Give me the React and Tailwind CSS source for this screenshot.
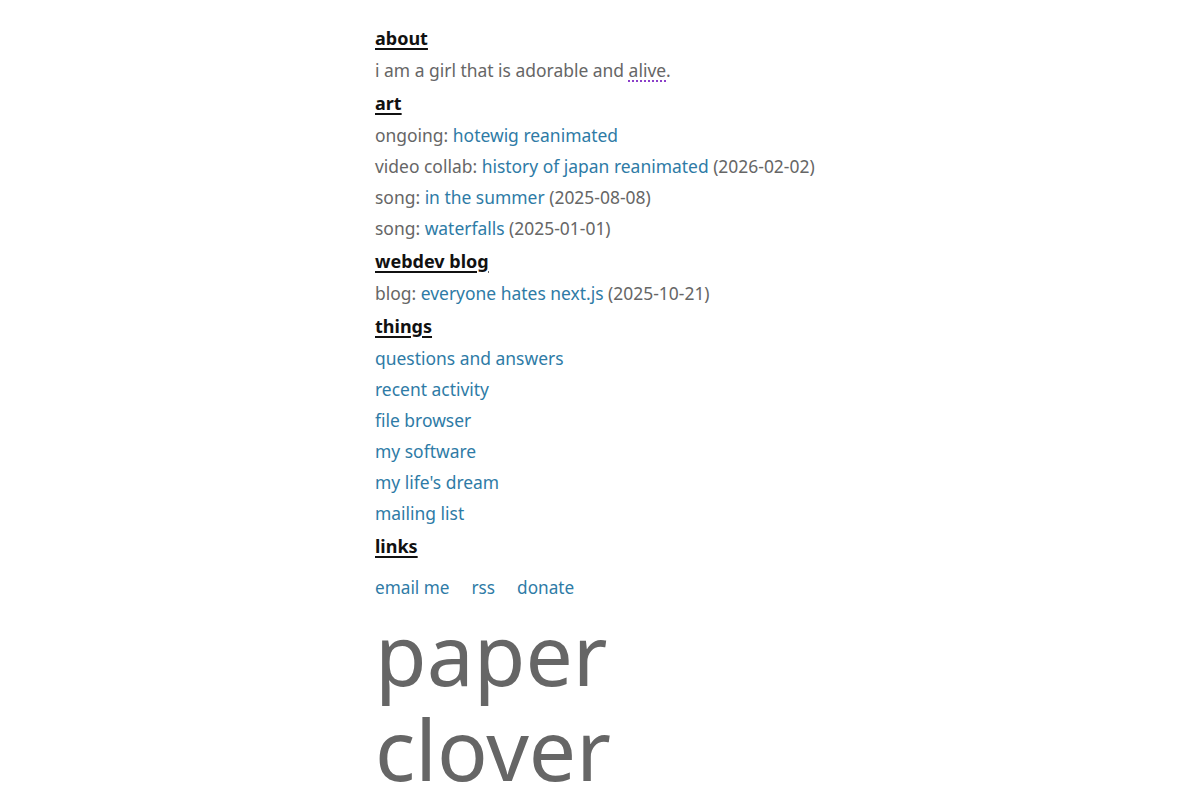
import React from "react";

const Link = ({ children }) => (
  <a href="#" className="text-[#2e7ba6] no-underline">{children}</a>
);

const H = ({ children }) => (
  <h2 className="text-[18px] font-bold text-[#111] underline underline-offset-[3px] decoration-[1.5px] leading-[34px]">{children}</h2>
);

const Row = ({ children }) => <div className="leading-[31px]">{children}</div>;

export default function App() {
  return (
    <div className="min-h-[800px] bg-white" style={{ fontFamily: '"Noto Sans", sans-serif' }}>
      <div className="mx-auto w-[450px] pt-[21px] text-[17.45px] text-[#666]">
        <H>about</H>
        <Row>
          i am a girl that is adorable and{" "}
          <span className="underline decoration-dotted decoration-[#8b3fc9] decoration-2 underline-offset-[3px]">alive</span>.
        </Row>
        <H>art</H>
        <Row>ongoing: <Link>hotewig reanimated</Link></Row>
        <Row>video collab: <Link>history of japan reanimated</Link> (2026-02-02)</Row>
        <Row>song: <Link>in the summer</Link> (2025-08-08)</Row>
        <Row>song: <Link>waterfalls</Link> (2025-01-01)</Row>
        <H>webdev blog</H>
        <Row>blog: <Link>everyone hates next.js</Link> (2025-10-21)</Row>
        <H>things</H>
        <Row><Link>questions and answers</Link></Row>
        <Row><Link>recent activity</Link></Row>
        <Row><Link>file browser</Link></Row>
        <Row><Link>my software</Link></Row>
        <Row><Link>my life's dream</Link></Row>
        <Row><Link>mailing list</Link></Row>
        <H>links</H>
        <div className="mt-[9px] flex gap-[22px] text-[17.2px] leading-[31px]">
          <Link>email me</Link>
          <Link>rss</Link>
          <Link>donate</Link>
        </div>
        <div className="mt-[3px] text-[84px] leading-[95px] text-[#666]">
          <div>paper</div>
          <div>clover</div>
        </div>
      </div>
    </div>
  );
}
